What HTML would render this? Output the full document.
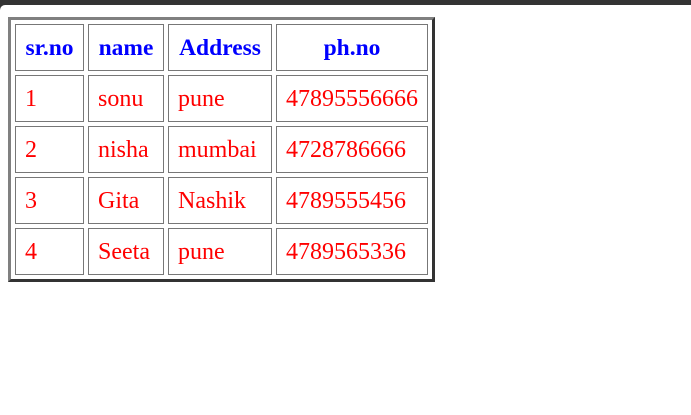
<!DOCTYPE html>
<html><head><style>
html,body{margin:0;padding:0;background:#333;}
.page{position:absolute;top:5px;left:0;width:691px;height:410px;background:#fff;border-top-left-radius:5px;}
table{position:absolute;left:8px;top:12px;border:3px solid;border-color:#808080 #333 #333 #808080;border-spacing:4px;border-collapse:separate;font-family:"Liberation Serif","Times New Roman",serif;font-size:24px;}
td,th{border:1px solid #777;height:47px;padding:1px 9px 0;box-sizing:border-box;text-align:left;color:#f00;font-weight:normal;}
th{color:#00f;font-weight:bold;text-align:center;font-size:23.5px;}
</style></head><body><div class="page">
<table>
<colgroup><col style="width:69px"><col style="width:76px"><col style="width:104px"><col style="width:152px"></colgroup>
<tr><th>sr.no</th><th>name</th><th>Address</th><th>ph.no</th></tr>
<tr><td>1</td><td>sonu</td><td>pune</td><td>47895556666</td></tr>
<tr><td>2</td><td>nisha</td><td>mumbai</td><td>4728786666</td></tr>
<tr><td>3</td><td>Gita</td><td>Nashik</td><td>4789555456</td></tr>
<tr><td>4</td><td>Seeta</td><td>pune</td><td>4789565336</td></tr>
</table>
</div></body></html>
